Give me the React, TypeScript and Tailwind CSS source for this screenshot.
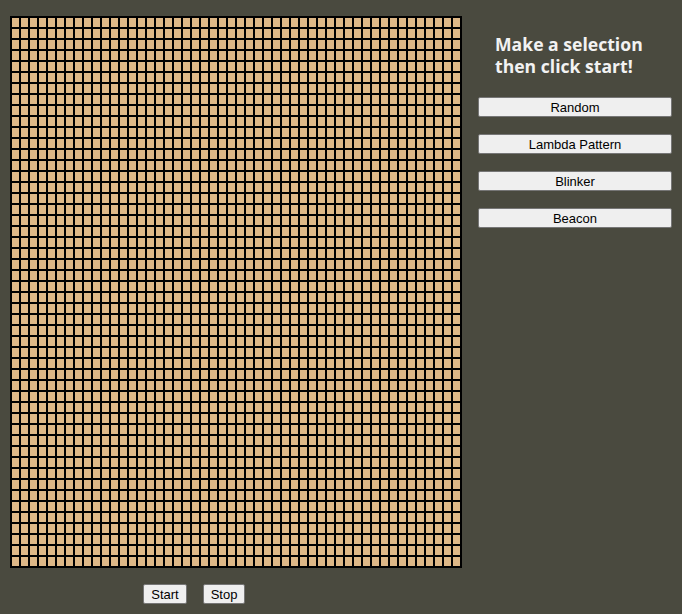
import React from 'react'

const ROWS = 50
const COLS = 50

export default function App() {
  const cells = Array.from({ length: ROWS * COLS })

  return (
    <div className="min-h-screen w-full bg-[#4a4a3f] flex items-start pt-[16px] pl-[10px] font-['Liberation_Sans',Arial,sans-serif]">
      {/* Board + controls */}
      <div className="flex flex-col">
        <div className="grid grid-cols-[repeat(50,9px)] border border-black w-[452px]">
          {cells.map((_, i) => (
            <div key={i} className="w-[9px] h-[11px] border border-black bg-[#deb887]" />
          ))}
        </div>
        <div className="flex gap-[16px] mt-[16px] pl-[133px]">
          <button className="w-[44px] h-[20px] bg-[#efefef] border border-[#767676] rounded-[2px] text-[13px] text-black leading-none">
            Start
          </button>
          <button className="w-[42px] h-[20px] bg-[#efefef] border border-[#767676] rounded-[2px] text-[13px] text-black leading-none">
            Stop
          </button>
        </div>
      </div>

      {/* Pattern picker */}
      <div className="ml-[16px] w-[194px] flex flex-col">
        <h2 className="pl-[17px] pt-[17px] text-[17.6px] leading-[22px] font-bold text-[#f2f2f2] font-['Open_Sans',sans-serif]">
          Make a selection
          <br />
          then click start!
        </h2>
        <div className="flex flex-col gap-[17px] mt-[20px]">
          {['Random', 'Lambda Pattern', 'Blinker', 'Beacon'].map((name) => (
            <button
              key={name}
              className="w-full h-[20px] bg-[#efefef] border border-[#767676] rounded-[2px] text-[13px] text-black leading-none"
            >
              {name}
            </button>
          ))}
        </div>
      </div>
    </div>
  )
}
